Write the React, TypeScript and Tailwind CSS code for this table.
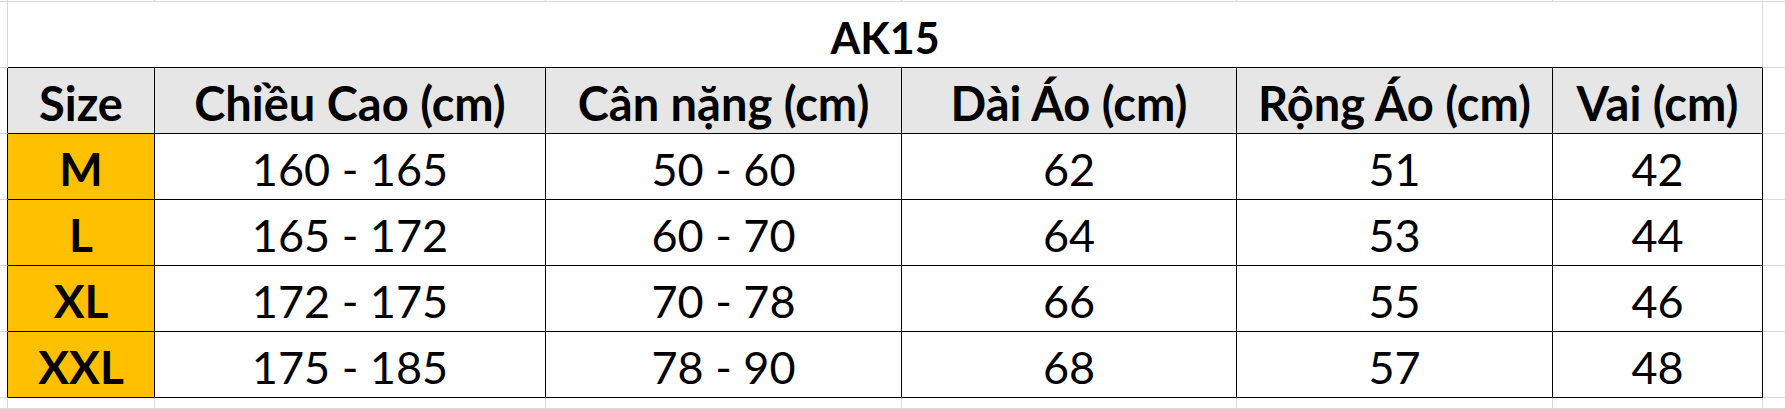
const headers = ["Size", "Chiều Cao (cm)", "Cân nặng (cm)", "Dài Áo (cm)", "Rộng Áo (cm)", "Vai (cm)"];

const rows = [
  ["M", "160 - 165", "50 - 60", "62", "51", "42"],
  ["L", "165 - 172", "60 - 70", "64", "53", "44"],
  ["XL", "172 - 175", "70 - 78", "66", "55", "46"],
  ["XXL", "175 - 185", "78 - 90", "68", "57", "48"],
];

// column widths measured off the sheet
const colW = ["w-[147px]", "w-[391px]", "w-[356px]", "w-[335px]", "w-[316px]", "w-[210px]"];

function GridStrip({ className }: { className: string }) {
  return (
    <div className={`flex ${className}`}>
      <div className="w-[8px] shrink-0 border-r border-b border-[#dadada]" />
      {colW.map((w, i) => (
        <div key={i} className={`${w} shrink-0 border-r border-b border-[#dadada]`} />
      ))}
      <div className="flex-1 border-b border-[#dadada]" />
    </div>
  );
}

function TableRow({ cells, header }: { cells: string[]; header?: boolean }) {
  return (
    <div className="flex h-[66px] shrink-0">
      <div className="w-[8px] shrink-0 border-r border-b border-r-black border-b-[#dadada]" />
      {cells.map((c, i) => (
        <div
          key={i}
          className={`${colW[i]} shrink-0 border-r border-b border-black flex items-center justify-center pt-[5px] leading-none text-black whitespace-nowrap ${
            header
              ? "bg-[#e7e6e6] font-bold text-[47px]"
              : i === 0
              ? "bg-[#ffc000] font-bold text-[46px]"
              : "bg-white text-[45px]"
          }`}
        >
          {c}
        </div>
      ))}
      <div className="flex-1 border-b border-[#dadada]" />
    </div>
  );
}

export default function App() {
  return (
    <div className="w-[1785px] h-[409px] bg-white overflow-hidden flex flex-col font-['Lato',sans-serif]">
      <GridStrip className="h-[2px] shrink-0" />
      <div className="flex h-[66px] shrink-0">
        <div className="w-[8px] shrink-0 border-r border-b border-[#dadada]" />
        <div className="w-[1755px] shrink-0 border-r border-r-[#dadada] border-b border-b-black flex items-center justify-center pt-[6px] text-[43px] font-bold leading-none text-black">
          AK15
        </div>
        <div className="flex-1 border-b border-[#dadada]" />
      </div>
      <TableRow cells={headers} header />
      {rows.map((r, i) => (
        <TableRow key={i} cells={r} />
      ))}
      <GridStrip className="flex-1" />
    </div>
  );
}
